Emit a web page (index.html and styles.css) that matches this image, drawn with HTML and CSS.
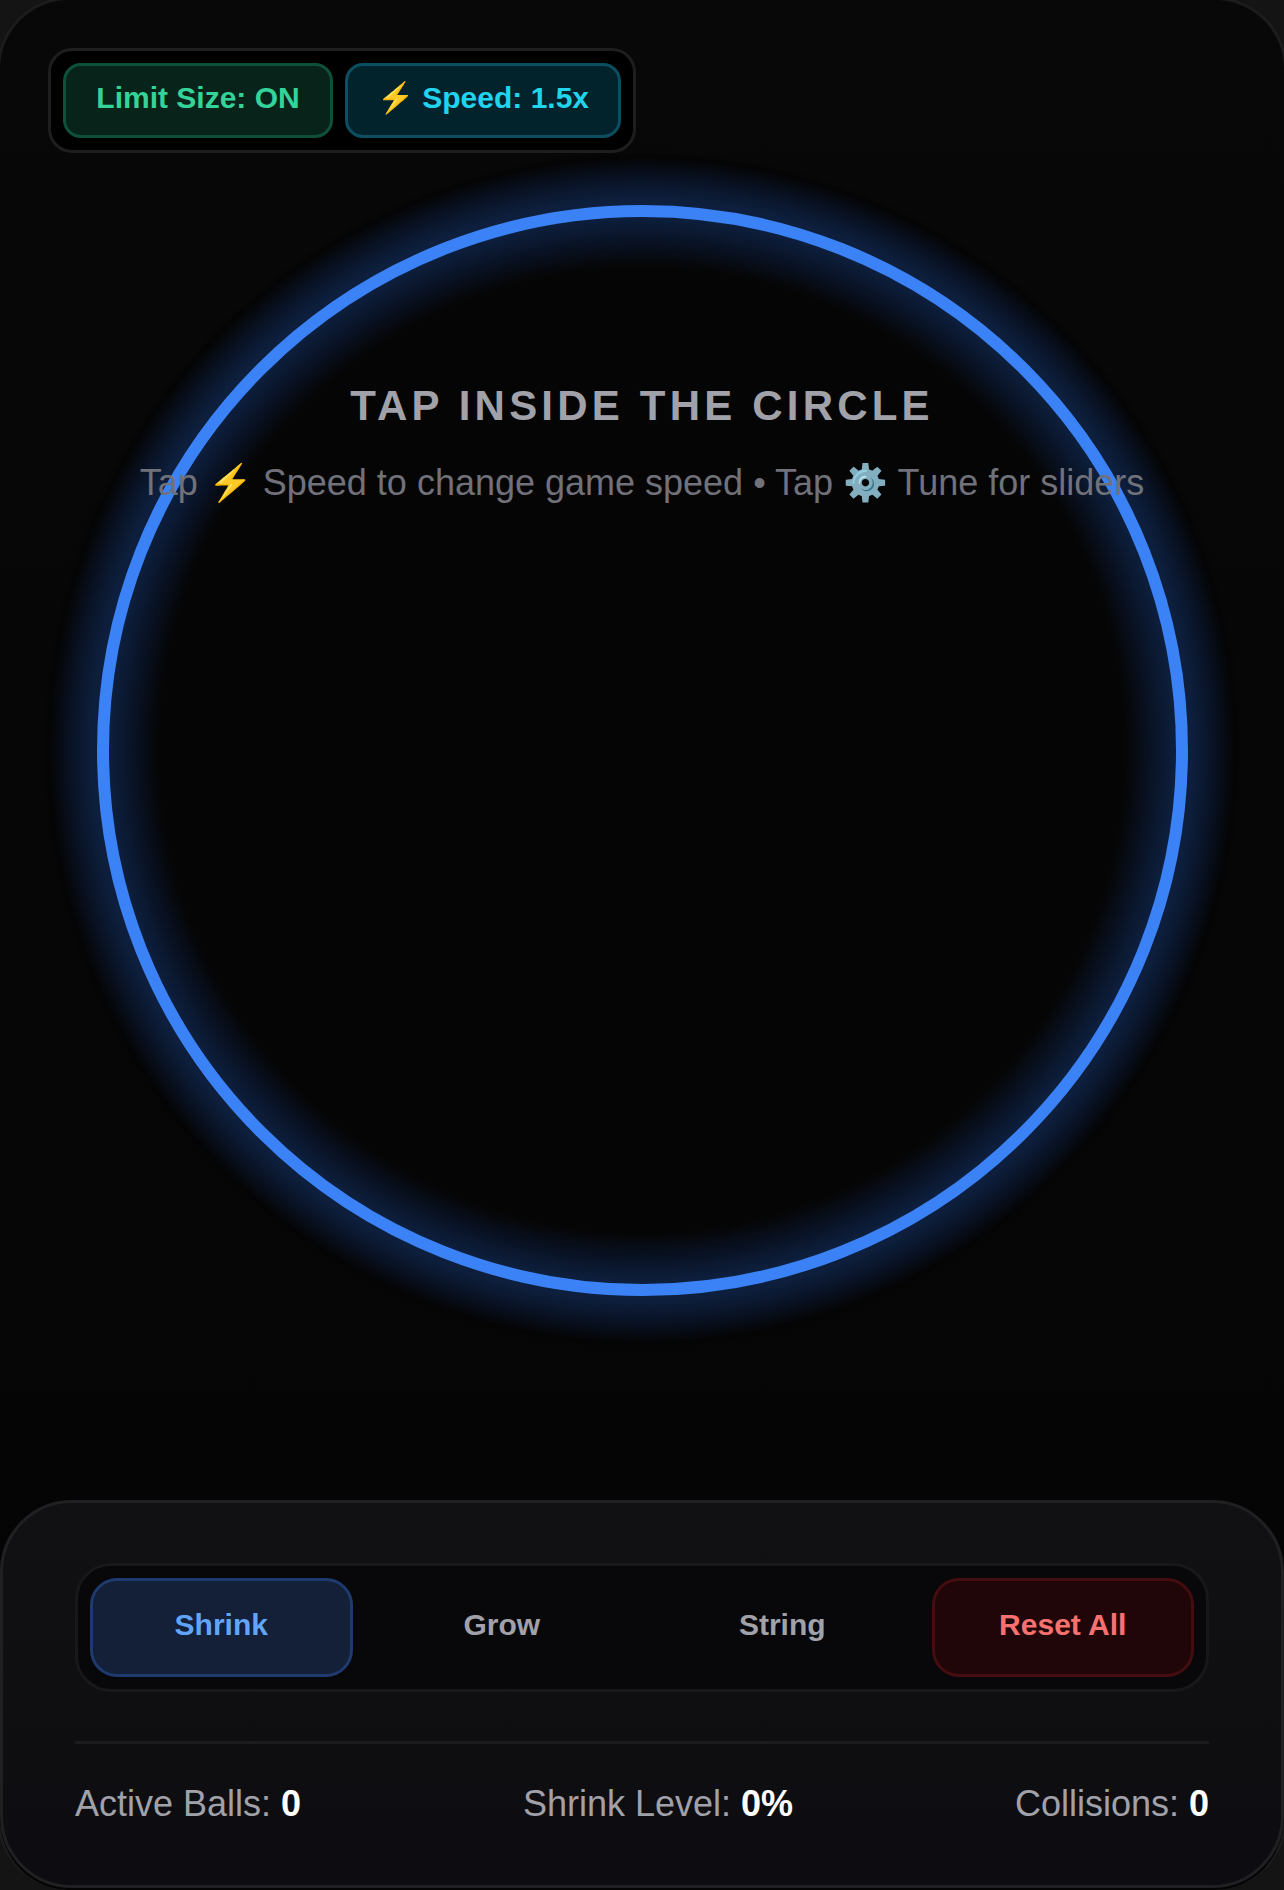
FILE: index.html
```html
<!DOCTYPE html>
<html lang="en">
<head>
  <meta charset="UTF-8">
  <meta name="viewport" content="width=device-width, initial-scale=1.0">
  <title>Shrink Balls</title>
  <link rel="stylesheet" href="styles.css">
</head>
<body>
  <div class="frame">
    <div class="stage">
      <div class="toolbar">
        <button class="pill pill-green">Limit Size: ON</button>
        <button class="pill pill-cyan">⚡ Speed: 1.5x</button>
      </div>
      <div class="glow">
        <div class="ring"></div>
      </div>
      <div class="hint">
        <h2 class="hint-title">TAP INSIDE THE CIRCLE</h2>
        <p class="hint-sub">Tap ⚡ Speed to change game speed • Tap ⚙️ Tune for sliders</p>
      </div>
    </div>
    <div class="panel">
      <div class="modes">
        <button class="mode mode-active">Shrink</button>
        <button class="mode">Grow</button>
        <button class="mode">String</button>
        <button class="mode mode-reset">Reset All</button>
      </div>
      <div class="stats">
        <span>Active Balls: <b>0</b></span>
        <span>Shrink Level: <b>0%</b></span>
        <span>Collisions: <b>0</b></span>
      </div>
    </div>
  </div>
</body>
</html>
```

FILE: styles.css
```css
* {
  box-sizing: border-box;
}

html, body {
  margin: 0;
  padding: 0;
  height: 100%;
  overflow: hidden;
  background: #141414;
  font-family: "Liberation Sans", Arial, sans-serif;
}

/* side and top borders sit just off the page, only the corners show */
.frame {
  width: 1290px;
  height: 1893px;
  margin: -3px -3px 0;
  display: flex;
  flex-direction: column;
  background: linear-gradient(180deg, #080808 0%, #040404 100%);
  border: 3px solid #1c1c1e;
  border-bottom: none;
  border-radius: 72px;
  overflow: hidden;
}

.stage {
  position: relative;
  flex: 1;
}

.toolbar {
  position: absolute;
  top: 48px;
  left: 48px;
  display: flex;
  gap: 12px;
  padding: 12px;
  background: #000;
  border: 3px solid #1e1e20;
  border-radius: 24px;
  z-index: 2;
}

.pill {
  height: 75px;
  padding: 0 0 6px;
  font: bold 30px "Liberation Sans", Arial, sans-serif;
  white-space: nowrap;
  border: 3px solid;
  border-radius: 18px;
}

.pill-green {
  width: 270px;
  color: #34d399;
  background: #08241a;
  border-color: #0f5039;
}

.pill-cyan {
  width: 276px;
  color: #22d3ee;
  background: #03232c;
  border-color: #0c4f62;
}

.glow {
  position: absolute;
  top: 150px;
  left: 42px;
  width: 1200px;
  height: 1200px;
  display: flex;
  align-items: center;
  justify-content: center;
  border-radius: 50%;
  background: radial-gradient(circle 600px at center,
    #050505 483px,
    #091224 508px,
    #0d1f3d 533px,
    #0d1f3d 550px,
    #091224 572px,
    #040404 593px,
    rgba(4,4,4,0) 600px);
}

.ring {
  width: 1091px;
  height: 1091px;
  border: 12px solid #3b82f6;
  border-radius: 50%;
}

.hint {
  position: absolute;
  top: 382px;
  left: 0;
  right: 0;
  text-align: center;
  z-index: 1;
}

.hint-title {
  margin: 0 0 32px;
  font-size: 42px;
  line-height: 48px;
  font-weight: bold;
  letter-spacing: 4.2px;
  color: #a1a1aa;
}

.hint-sub {
  margin: 0;
  font-size: 36px;
  line-height: 41px;
  color: #71717a;
}

.panel {
  height: 388px;
  margin-bottom: 2px;
  padding: 60px 72px 0;
  background: linear-gradient(180deg, #111113 0%, #0d0d11 100%);
  border: 3px solid #202023;
  border-radius: 72px;
}

.modes {
  display: grid;
  grid-template-columns: repeat(4, 1fr);
  gap: 18px;
  padding: 12px;
  background: #08080a;
  border: 3px solid #18181b;
  border-radius: 36px;
}

.mode {
  height: 99px;
  padding: 0 0 5px;
  font: bold 30px "Liberation Sans", Arial, sans-serif;
  color: #a1a1aa;
  background: transparent;
  border: 3px solid transparent;
  border-radius: 27px;
}

.mode-active {
  color: #60a5fa;
  background: #132038;
  border-color: #1e3a6e;
}

.mode-reset {
  color: #f87171;
  background: #210609;
  border-color: #450d10;
}

.stats {
  display: flex;
  justify-content: space-between;
  margin-top: 49px;
  padding-top: 39px;
  border-top: 3px solid #1c1c1f;
  font-size: 36px;
  color: #a1a1aa;
}

.stats b {
  color: #fff;
}
```
